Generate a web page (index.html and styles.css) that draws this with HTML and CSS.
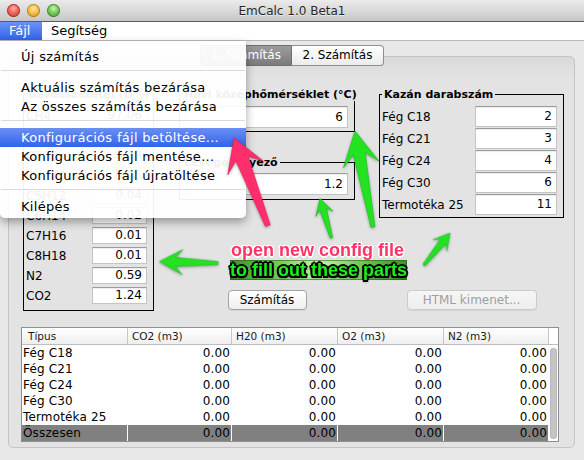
FILE: index.html
```html
<!DOCTYPE html>
<html lang="hu">
<head>
<meta charset="utf-8">
<title>EmCalc 1.0 Beta1</title>
<link rel="stylesheet" href="styles.css">
</head>
<body>
<div class="window">
  <div class="titlebar">
    <div class="lights"><span class="light red"></span><span class="light yellow"></span><span class="light green"></span></div>
    <div class="title">EmCalc 1.0 Beta1</div>
    <div></div>
  </div>
  <div class="menubar">
    <span class="mb-item active">Fájl</span>
    <span class="mb-item">Segítség</span>
  </div>
  <div class="content">
    <div class="tabs">
      <div class="tab selected">1. Számítás</div>
      <div class="tab">2. Számítás</div>
    </div>
    <div class="panel">
      <div class="upper">
        <fieldset class="box gas">
          <legend>Gázösszetétel (tf%)</legend>
          <div class="rows">
            <div class="row"><span>CH4</span><span class="field">97.06</span></div>
            <div class="row"><span>C2H6</span><span class="field">0.79</span></div>
            <div class="row"><span>C3H8</span><span class="field">0.19</span></div>
            <div class="row"><span>C4H10</span><span class="field">0.05</span></div>
            <div class="row"><span>C5H12</span><span class="field">0.04</span></div>
            <div class="row"><span>C6H14</span><span class="field">0.02</span></div>
            <div class="row"><span>C7H16</span><span class="field">0.01</span></div>
            <div class="row"><span>C8H18</span><span class="field">0.01</span></div>
            <div class="row"><span>N2</span><span class="field">0.59</span></div>
            <div class="row"><span>CO2</span><span class="field">1.24</span></div>
          </div>
        </fieldset>
        <div class="right">
          <div class="mid">
            <fieldset class="box single">
              <legend>Havi középhőmérséklet (°C)</legend>
              <span class="field">6</span>
            </fieldset>
            <fieldset class="box single second">
              <legend>Levegőtényező</legend>
              <span class="field">1.2</span>
            </fieldset>
          </div>
          <fieldset class="box kazan">
            <legend>Kazán darabszám</legend>
            <div class="rows">
              <div class="row"><span>Fég C18</span><span class="field">2</span></div>
              <div class="row"><span>Fég C21</span><span class="field">3</span></div>
              <div class="row"><span>Fég C24</span><span class="field">4</span></div>
              <div class="row"><span>Fég C30</span><span class="field">6</span></div>
              <div class="row"><span>Termotéka 25</span><span class="field">11</span></div>
            </div>
          </fieldset>
          <div class="btn-cell"><button class="btn btn-calc">Számítás</button></div>
          <div class="btn-cell"><button class="btn btn-html" disabled>HTML kimenet...</button></div>
        </div>
      </div>
      <div class="table">
        <div class="thead">
          <div class="h first">Típus</div>
          <div class="h">CO2 (m3)</div>
          <div class="h">H20 (m3)</div>
          <div class="h">O2 (m3)</div>
          <div class="h">N2 (m3)</div>
          <div class="h end"></div>
        </div>
        <div class="tbody">
          <div class="scroll"><div class="thumb"></div></div>
          <div class="c name">Fég C18</div><div class="c">0.00</div><div class="c">0.00</div><div class="c">0.00</div><div class="c">0.00</div>
          <div class="c name">Fég C21</div><div class="c">0.00</div><div class="c">0.00</div><div class="c">0.00</div><div class="c">0.00</div>
          <div class="c name">Fég C24</div><div class="c">0.00</div><div class="c">0.00</div><div class="c">0.00</div><div class="c">0.00</div>
          <div class="c name">Fég C30</div><div class="c">0.00</div><div class="c">0.00</div><div class="c">0.00</div><div class="c">0.00</div>
          <div class="c name">Termotéka 25</div><div class="c">0.00</div><div class="c">0.00</div><div class="c">0.00</div><div class="c">0.00</div>
          <div class="c name tot">Összesen</div><div class="c tot">0.00</div><div class="c tot">0.00</div><div class="c tot">0.00</div><div class="c tot">0.00</div>
        </div>
      </div>
    </div>
  </div>

  <div class="menu">
    <div class="mi">Új számítás</div>
    <div class="sep"></div>
    <div class="mi">Aktuális számítás bezárása</div>
    <div class="mi">Az összes számítás bezárása</div>
    <div class="sep"></div>
    <div class="mi hl">Konfigurációs fájl betöltése...</div>
    <div class="mi">Konfigurációs fájl mentése...</div>
    <div class="mi">Konfigurációs fájl újratöltése</div>
    <div class="sep"></div>
    <div class="mi">Kilépés</div>
  </div>

  <svg class="arrows" width="584" height="460" viewBox="0 0 584 460">
    <g class="g-arrow">
      <polygon transform="translate(159.5 261.5) rotate(-178.5)" points="0,0 -23,-12.5 -16,-4.5 -58.5,-1.5 -58.5,1.5 -16,4.5 -23,12.5"/>
      <polygon transform="translate(320 198.5) rotate(-106.2)" points="0,0 -16,-9 -11,-3.5 -41,-1.2 -41,1.2 -11,3.5 -16,9"/>
      <polygon transform="translate(355 131) rotate(-100.6)" points="0,0 -34,-18 -23,-6 -97.7,-2 -97.7,2 -23,6 -34,18"/>
      <polygon transform="translate(450 233) rotate(-50.9)" points="0,0 -16,-9 -11,-3.5 -41.2,-1.2 -41.2,1.2 -11,3.5 -16,9"/>
    </g>
    <g class="p-arrow">
      <polygon transform="translate(234 138) rotate(-111.1)" points="0,0 -32,-19 -22,-6.5 -94,-2.5 -94,2.5 -22,6.5 -32,19"/>
    </g>
  </svg>
  <div class="note pink">open new config file</div>
  <div class="note green">to fill out these parts</div>
</div>
</body>
</html>
```

FILE: styles.css
```css
* { box-sizing: border-box; }
html, body { margin: 0; padding: 0; }
body {
  background: #e8e8e8;
  font-family: "DejaVu Sans", "Noto Sans", sans-serif;
  font-size: 12px;
  color: #000;
}
.window {
  position: relative;
  width: 584px;
  height: 460px;
  overflow: hidden;
  background: #e8e8e8;
}

/* title bar */
.titlebar {
  height: 22px;
  border-bottom: 1px solid #5c5c5c;
  background: linear-gradient(#ebebeb, #d8d8d8 55%, #c6c6c6);
  display: grid;
  grid-template-columns: 1fr auto 1fr;
  align-items: center;
}
.lights { display: flex; gap: 7px; padding-left: 7px; }
.light { width: 13px; height: 13px; border-radius: 50%; }
.red {
  background: radial-gradient(circle at 50% 35%, #ffb2a8 0, #f0605a 45%, #c4302c 100%);
  box-shadow: inset 0 0 0 1px rgba(110, 20, 20, .55);
}
.yellow {
  background: radial-gradient(circle at 50% 35%, #ffe7a6 0, #f6be45 45%, #c98a17 100%);
  box-shadow: inset 0 0 0 1px rgba(120, 80, 10, .5);
}
.green {
  background: radial-gradient(circle at 50% 35%, #c8f5b0 0, #74c957 45%, #3d8f2b 100%);
  box-shadow: inset 0 0 0 1px rgba(30, 80, 20, .5);
}
.title {
  font-size: 12px;
  color: #262626;
  text-shadow: 0 1px 0 rgba(255, 255, 255, .6);
}

/* menu bar */
.menubar {
  height: 19px;
  background: #fff;
  border-bottom: 1px solid #b8b8b8;
  display: flex;
  font-size: 13px;
  line-height: 18px;
}
.mb-item { padding: 0 10px 0 9px; }
.mb-item.active {
  width: 42px;
  color: #fff;
  background: linear-gradient(#6d91f5, #3162ea);
}

/* tabs */
.content { padding-top: 4px; }
.tabs {
  position: relative;
  z-index: 1;
  display: flex;
  justify-content: center;
  height: 21px;
}
.tab {
  width: 92px;
  height: 21px;
  line-height: 19px;
  text-align: center;
  font-size: 12px;
  border: 1px solid #8f8f8f;
}
.tab.selected {
  color: #fff;
  background: linear-gradient(#9c9c9c, #7b7b7b);
  border-color: #6e6e6e;
  border-radius: 4px 0 0 4px;
}
.tab:not(.selected) {
  background: linear-gradient(#ffffff, #ececec);
  border-left: none;
  border-radius: 0 4px 4px 0;
}
.panel {
  margin: -10px 9px 0 8px;
  height: 392px;
  border: 1px solid #c4c4c4;
  border-radius: 5px;
  background: linear-gradient(#d9d9d9, #e3e3e3 20px, #e3e3e3);
  padding-top: 31px;
}

/* group boxes */
.upper { display: flex; padding-left: 14px; }
.box {
  margin: 0;
  border: 1px solid #000;
  min-width: 0;
}
.box legend {
  font-weight: bold;
  font-size: 11px;
  line-height: 13px;
  padding: 0 2px;
  white-space: nowrap;
}
.rows { display: flex; flex-direction: column; }
.row {
  display: flex;
  justify-content: space-between;
  align-items: center;
  white-space: nowrap;
}
.field {
  display: block;
  background: #fff;
  border: 1px solid #c4c4c4;
  border-top-color: #9c9c9c;
  box-shadow: inset 0 1px 1px rgba(0, 0, 0, .08);
  text-align: right;
  padding-right: 4px;
  font-size: 12px;
}
.gas { width: 131px; padding: 6px 6px 6px 2px; }
.gas .rows { gap: 3px; }
.gas .row { height: 17px; }
.gas .field { width: 55px; height: 17px; line-height: 15px; }

.right {
  display: grid;
  grid-template-columns: 176px 185px;
  grid-template-rows: auto 1fr;
  column-gap: 24px;
  margin-left: 25px;
}
.mid { display: flex; flex-direction: column; }
.single { padding: 5px 6px 3px 2px; }
.single .field { margin-left: 4px; height: 22px; line-height: 20px; }
.single.second { margin-top: 24px; padding: 4px 6px 4px 2px; }

.kazan { align-self: start; padding: 5px 6px 2px 2px; }
.kazan .rows { gap: 1px; }
.kazan .row { height: 21px; }
.kazan .field { width: 82px; height: 21px; line-height: 19px; }

.btn-cell { align-self: end; justify-self: center; margin-bottom: 1px; }
.btn {
  display: block;
  height: 20px;
  padding: 0;
  font: 12px "DejaVu Sans", sans-serif;
  color: #000;
  border: 1px solid #a3a3a3;
  border-radius: 4px;
  background: linear-gradient(#ffffff, #efefef);
  box-shadow: 0 1px 0 rgba(0, 0, 0, .06);
}
.btn-calc { width: 79px; }
.btn-html {
  width: 130px;
  color: #9f9f9f;
  border-color: #c9c9c9;
  background: linear-gradient(#f6f6f6, #eeeeee);
}

/* table */
.table {
  margin: 16px 0 0 12px;
  width: 538px;
  border: 1px solid #8e8e8e;
  background: #fff;
}
.thead, .tbody {
  display: grid;
  grid-template-columns: 106px 104px 106px 106px 105px 9px;
}
.thead {
  height: 17px;
  border-bottom: 1px solid #bdbdbd;
  background: linear-gradient(#ffffff, #eeeeee);
  font-size: 10.5px;
  line-height: 16px;
  color: #1a1a1a;
}
.h { border-right: 1px solid #c6c6c6; padding-left: 4px; white-space: nowrap; }
.h.first { padding-left: 6px; }
.h.end { border-right: none; background: #fff; }
.tbody { grid-auto-rows: 16px; font-size: 12px; line-height: 16px; }
.c {
  border-right: 1px solid transparent;
  padding: 0 1px;
  text-align: right;
  white-space: nowrap;
  letter-spacing: .15px;
}
.c.name { text-align: left; }
.c.tot { background: #808080; border-right-color: #fff; }
.scroll { grid-column: 6; grid-row: 1 / span 6; padding: 3px 1px 2px 1px; }
.thumb {
  height: 100%;
  border-radius: 4px;
  background: #c4c4c4;
  box-shadow: inset 0 0 0 1px rgba(0, 0, 0, .06);
}

/* dropdown menu */
.menu {
  position: absolute;
  left: 0;
  top: 41px;
  width: 246px;
  height: 177px;
  padding-top: 6px;
  background: rgba(255, 255, 255, .94);
  border-radius: 0 0 5px 5px;
  box-shadow: 0 4px 10px rgba(0, 0, 0, .35);
  font-size: 13px;
  letter-spacing: .3px;
  z-index: 5;
}
.mi { height: 19px; line-height: 19px; padding-left: 21px; white-space: nowrap; }
.mi.hl { color: #fff; background: linear-gradient(#6a8ff4, #3264ea); }
.sep { height: 1px; margin: 4px 1px 7px; background: #dadada; }

/* annotations */
.arrows { position: absolute; left: 0; top: 0; z-index: 6; }
.g-arrow polygon { fill: #22e222; stroke: #17c217; stroke-width: .6; stroke-linejoin: round; }
.p-arrow polygon { fill: #ff2d6c; stroke: #e81f5c; stroke-width: .6; stroke-linejoin: round; }
.arrows g { filter: drop-shadow(0 1px 1.5px rgba(0, 0, 0, .35)); }
.note {
  position: absolute;
  z-index: 7;
  font: bold 18px/20px "Liberation Sans", Arial, sans-serif;
  white-space: nowrap;
}
.note.pink {
  left: 231px;
  top: 240px;
  color: #ff3366;
  text-shadow: -1.5px 0 #fff, 1.5px 0 #fff, 0 -1.5px #fff, 0 1.5px #fff,
    -1px -1px #fff, 1px -1px #fff, -1px 1px #fff, 1px 1px #fff,
    0 1px 3px rgba(0, 0, 0, .35);
}
.note.green {
  left: 230px;
  top: 260px;
  color: #1cf01c;
  text-shadow: -2px 0 #000, 2px 0 #000, 0 -2px #000, 0 2px #000,
    -1.5px -1.5px #000, 1.5px -1.5px #000, -1.5px 1.5px #000, 1.5px 1.5px #000,
    0 2px 3px rgba(0, 0, 0, .5);
}
```
